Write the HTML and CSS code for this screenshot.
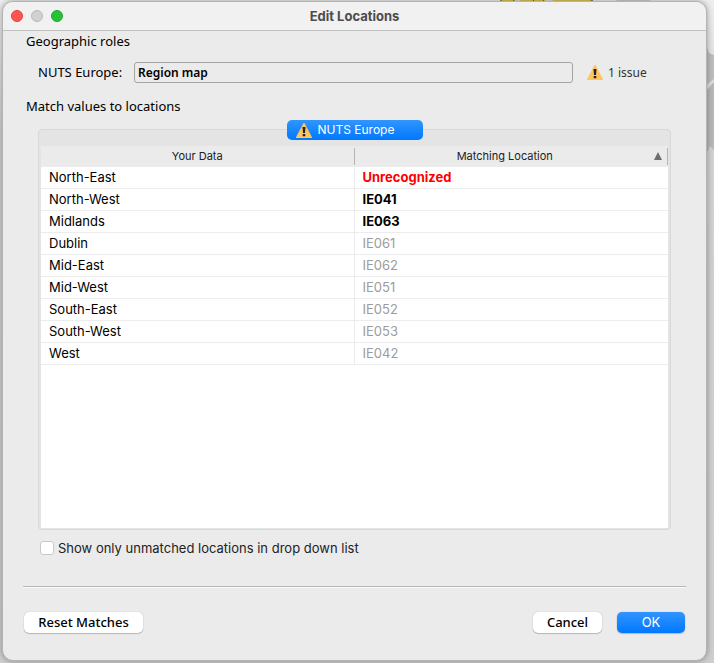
FILE: index.html
```html
<!DOCTYPE html>
<html lang="en">
<head>
<meta charset="utf-8">
<title>Edit Locations</title>
<link rel="stylesheet" href="styles.css">
</head>
<body>
<svg class="map map-top" width="150" height="4" viewBox="0 0 150 4" aria-hidden="true">
  <path d="M0 0h93l-5 4H2z" fill="#dcc45a"/>
  <path d="M14 0h6l2 3h-5zM45 0h8l-2 3h-5z" fill="#ddd"/>
  <path d="M-1 2l3-2M13 0l4 3M33 0l3 3M43 0l3 3M93 0l-4 2" fill="none" stroke="#666"/>
  <path d="M104 4l14-4h32v4z" fill="#cfcfcf"/>
</svg>
<svg class="map map-side" width="8" height="110" viewBox="0 0 8 110" aria-hidden="true">
  <path d="M0 0l3 8 5 2v24l-8 6z" fill="#bdbdbd"/>
  <path d="M0 46l8-9v68l-4-4-4 8z" fill="#b8b8b8"/>
</svg>
<main class="window">
  <header class="titlebar">
    <div class="lights">
      <button class="light close" aria-label="Close"></button>
      <button class="light minimize" aria-label="Minimize" disabled></button>
      <button class="light zoom" aria-label="Zoom"></button>
    </div>
    <h1>Edit Locations</h1>
  </header>
  <div class="content">
    <h2>Geographic roles</h2>
    <div class="role">
      <label for="role">NUTS Europe:</label>
      <select id="role"><option>Region map</option></select>
      <span class="issue">
        <svg class="warning" viewBox="0 0 16 15" aria-hidden="true"><path d="M7.300.6Q8-.4 8.700.6L15.900 14q.3 1-.7 1H.8q-1 0-.7-1z" fill="#ffc55c"/><path d="M6.500 4h3L9 10H7zM6.700 11h2.600v2.200H6.700z" fill="#222"/></svg>
        1 issue
      </span>
    </div>
    <h2>Match values to locations</h2>
    <section class="panel">
      <button class="tab">
        <svg class="warning" viewBox="0 0 16 15" aria-hidden="true"><path d="M7.300.6Q8-.4 8.700.6L15.900 14q.3 1-.7 1H.8q-1 0-.7-1z" fill="#ffc55c"/><path d="M6.500 4h3L9 10H7zM6.700 11h2.600v2.200H6.700z" fill="#222"/></svg>
        NUTS Europe
      </button>
      <div class="sheet">
        <table>
          <thead>
            <tr>
              <th scope="col"><div class="head">Your Data</div></th>
              <th scope="col" aria-sort="ascending"><div class="head">Matching Location<svg class="sort" viewBox="0 0 8 8" aria-hidden="true"><path d="M4 0l4 8H0z" fill="#6e6e6e"/></svg></div></th>
            </tr>
          </thead>
          <tbody>
            <tr><td>North-East</td><td class="unknown">Unrecognized</td></tr>
            <tr><td>North-West</td><td class="edited">IE041</td></tr>
            <tr><td>Midlands</td><td class="edited">IE063</td></tr>
            <tr><td>Dublin</td><td class="matched">IE061</td></tr>
            <tr><td>Mid-East</td><td class="matched">IE062</td></tr>
            <tr><td>Mid-West</td><td class="matched">IE051</td></tr>
            <tr><td>South-East</td><td class="matched">IE052</td></tr>
            <tr><td>South-West</td><td class="matched">IE053</td></tr>
            <tr><td>West</td><td class="matched">IE042</td></tr>
          </tbody>
        </table>
      </div>
    </section>
    <label class="filter"><input type="checkbox">Show only unmatched locations in drop down list</label>
    <footer class="actions">
      <button class="button reset">Reset Matches</button>
      <button class="button cancel">Cancel</button>
      <button class="button primary">OK</button>
    </footer>
  </div>
</main>
</body>
</html>
```
FILE: styles.css
```css
* { box-sizing: border-box; }

body {
  margin: 0;
  min-height: 100vh;
  padding: 1px 7px 2px 2px;
  display: flex;
  position: relative;
  background: linear-gradient(#efefef, #d2d2d2 20%, #cfcfcf);
  font: 13px/16px Inter, sans-serif;
  color: #000;
}

button, select, input { font: inherit; margin: 0; padding: 0; }

.map { position: absolute; }
.map-top { top: 0; left: 70%; }
.map-side { top: 45px; right: 0; }

.window {
  position: relative;
  flex: 1;
  display: flex;
  flex-direction: column;
  background: #ebebeb;
  border: 1px solid #b4b4b4;
  border-radius: 11px;
  box-shadow: 0 0 6px rgba(0, 0, 0, .35);
  overflow: hidden;
}

.titlebar {
  display: grid;
  grid-template-columns: 1fr auto 1fr;
  align-items: center;
  height: 29px;
  padding: 0 8px;
  background: #f1f1f1;
  border-bottom: 1px solid #c2c2c2;
}

.lights { display: flex; gap: 8px; }
.light { width: 12px; height: 12px; border: 1px solid; border-radius: 50%; }
.close { background: #ff5450; border-color: #e0403d; }
.minimize { background: #d1d1d1; border-color: #b8b8b8; }
.zoom { background: #27c138; border-color: #1da82c; }

h1 { margin: 0; font-size: 13px; font-weight: 700; color: #4c4c4c; }

.content {
  flex: 1;
  display: flex;
  flex-direction: column;
  padding: 2px 20px 27px;
}

h2, .role label, .reset, .cancel { font-family: "Noto Sans", sans-serif; font-size: 13px; }
h2 { margin: 0 3px; font-weight: 400; line-height: 16px; }

.role {
  display: flex;
  align-items: center;
  height: 21px;
  margin: 13px 15px 15px;
}
.role label { flex: 0 0 96px; padding-bottom: 2px; }
.role select {
  flex: 1;
  height: 21px;
  padding: 0 3px;
  appearance: none;
  background: #ebebeb;
  border: 1px solid #a4a4a4;
  border-radius: 3px;
  font-family: "Noto Sans", sans-serif;
  font-size: 12px;
  font-weight: 600;
  color: #000;
}
.issue {
  flex: 0 0 98px;
  display: flex;
  align-items: center;
  gap: 5px;
  padding-left: 14px;
  font-family: "Noto Sans", sans-serif;
  font-size: 12px;
  color: #333;
}
.warning { flex: none; width: 16px; height: 15px; }

.panel {
  position: relative;
  flex: 1;
  display: flex;
  margin: 15px 15px 0;
  padding: 16px 2px 1px;
  background: #e4e4e4;
  border: 1px solid #d8d8d8;
  border-radius: 4px;
}
.tab {
  position: absolute;
  top: -10px;
  left: 50%;
  width: 136px;
  height: 20px;
  margin-left: -68px;
  padding-left: 9px;
  display: flex;
  align-items: center;
  gap: 6px;
  border: 0;
  border-radius: 5px;
  background: linear-gradient(#3295ff, #0078fe);
  color: #fff;
  font-size: 12px;
}
.sheet { flex: 1; background: #fff; }

table { width: 100%; table-layout: fixed; border-collapse: separate; border-spacing: 0; }
th {
  height: 21px;
  padding: 0;
  background: #ebebeb;
  font-size: 11px;
  font-weight: 400;
  color: #222;
}
.head {
  position: relative;
  height: 17px;
  line-height: 17px;
  border-right: 1px solid #b5b5b5;
}
th + th .head { padding-right: 12px; }
.sort { position: absolute; top: 4px; right: 5px; width: 8px; height: 8px; }
td {
  height: 22px;
  padding: 0 8px 2px;
  border-bottom: 1px solid #ececec;
}
td:first-child { border-right: 1px solid #ececec; }
.unknown, .edited { font-weight: 700; }
.unknown { color: #f00; }
.matched { color: #9c9c9c; }

.filter {
  display: flex;
  align-items: center;
  gap: 4px;
  margin: 10px 17px 0;
  color: #222;
}
.filter input {
  width: 14px;
  height: 14px;
  appearance: none;
  background: #fff;
  border: 1px solid #c9c9c9;
  border-radius: 3px;
}

.actions {
  display: flex;
  gap: 15px;
  margin-top: 30px;
  padding: 25px 1px 0;
  border-top: 1px solid #b6b6b6;
  box-shadow: inset 0 1px #fafafa;
}
.button {
  height: 21px;
  padding-bottom: 2px;
  border: 0;
  border-radius: 5px;
  background: #fff;
  box-shadow: 0 0 1px rgba(0, 0, 0, .3), 0 1px 1px rgba(0, 0, 0, .2);
  color: #000;
}
.reset { width: 119px; margin-right: auto; }
.cancel { width: 69px; }
.primary { width: 68px; background: linear-gradient(#3295ff, #0078fe); color: #fff; }
.reset, .cancel { font-weight: 500; }
```
